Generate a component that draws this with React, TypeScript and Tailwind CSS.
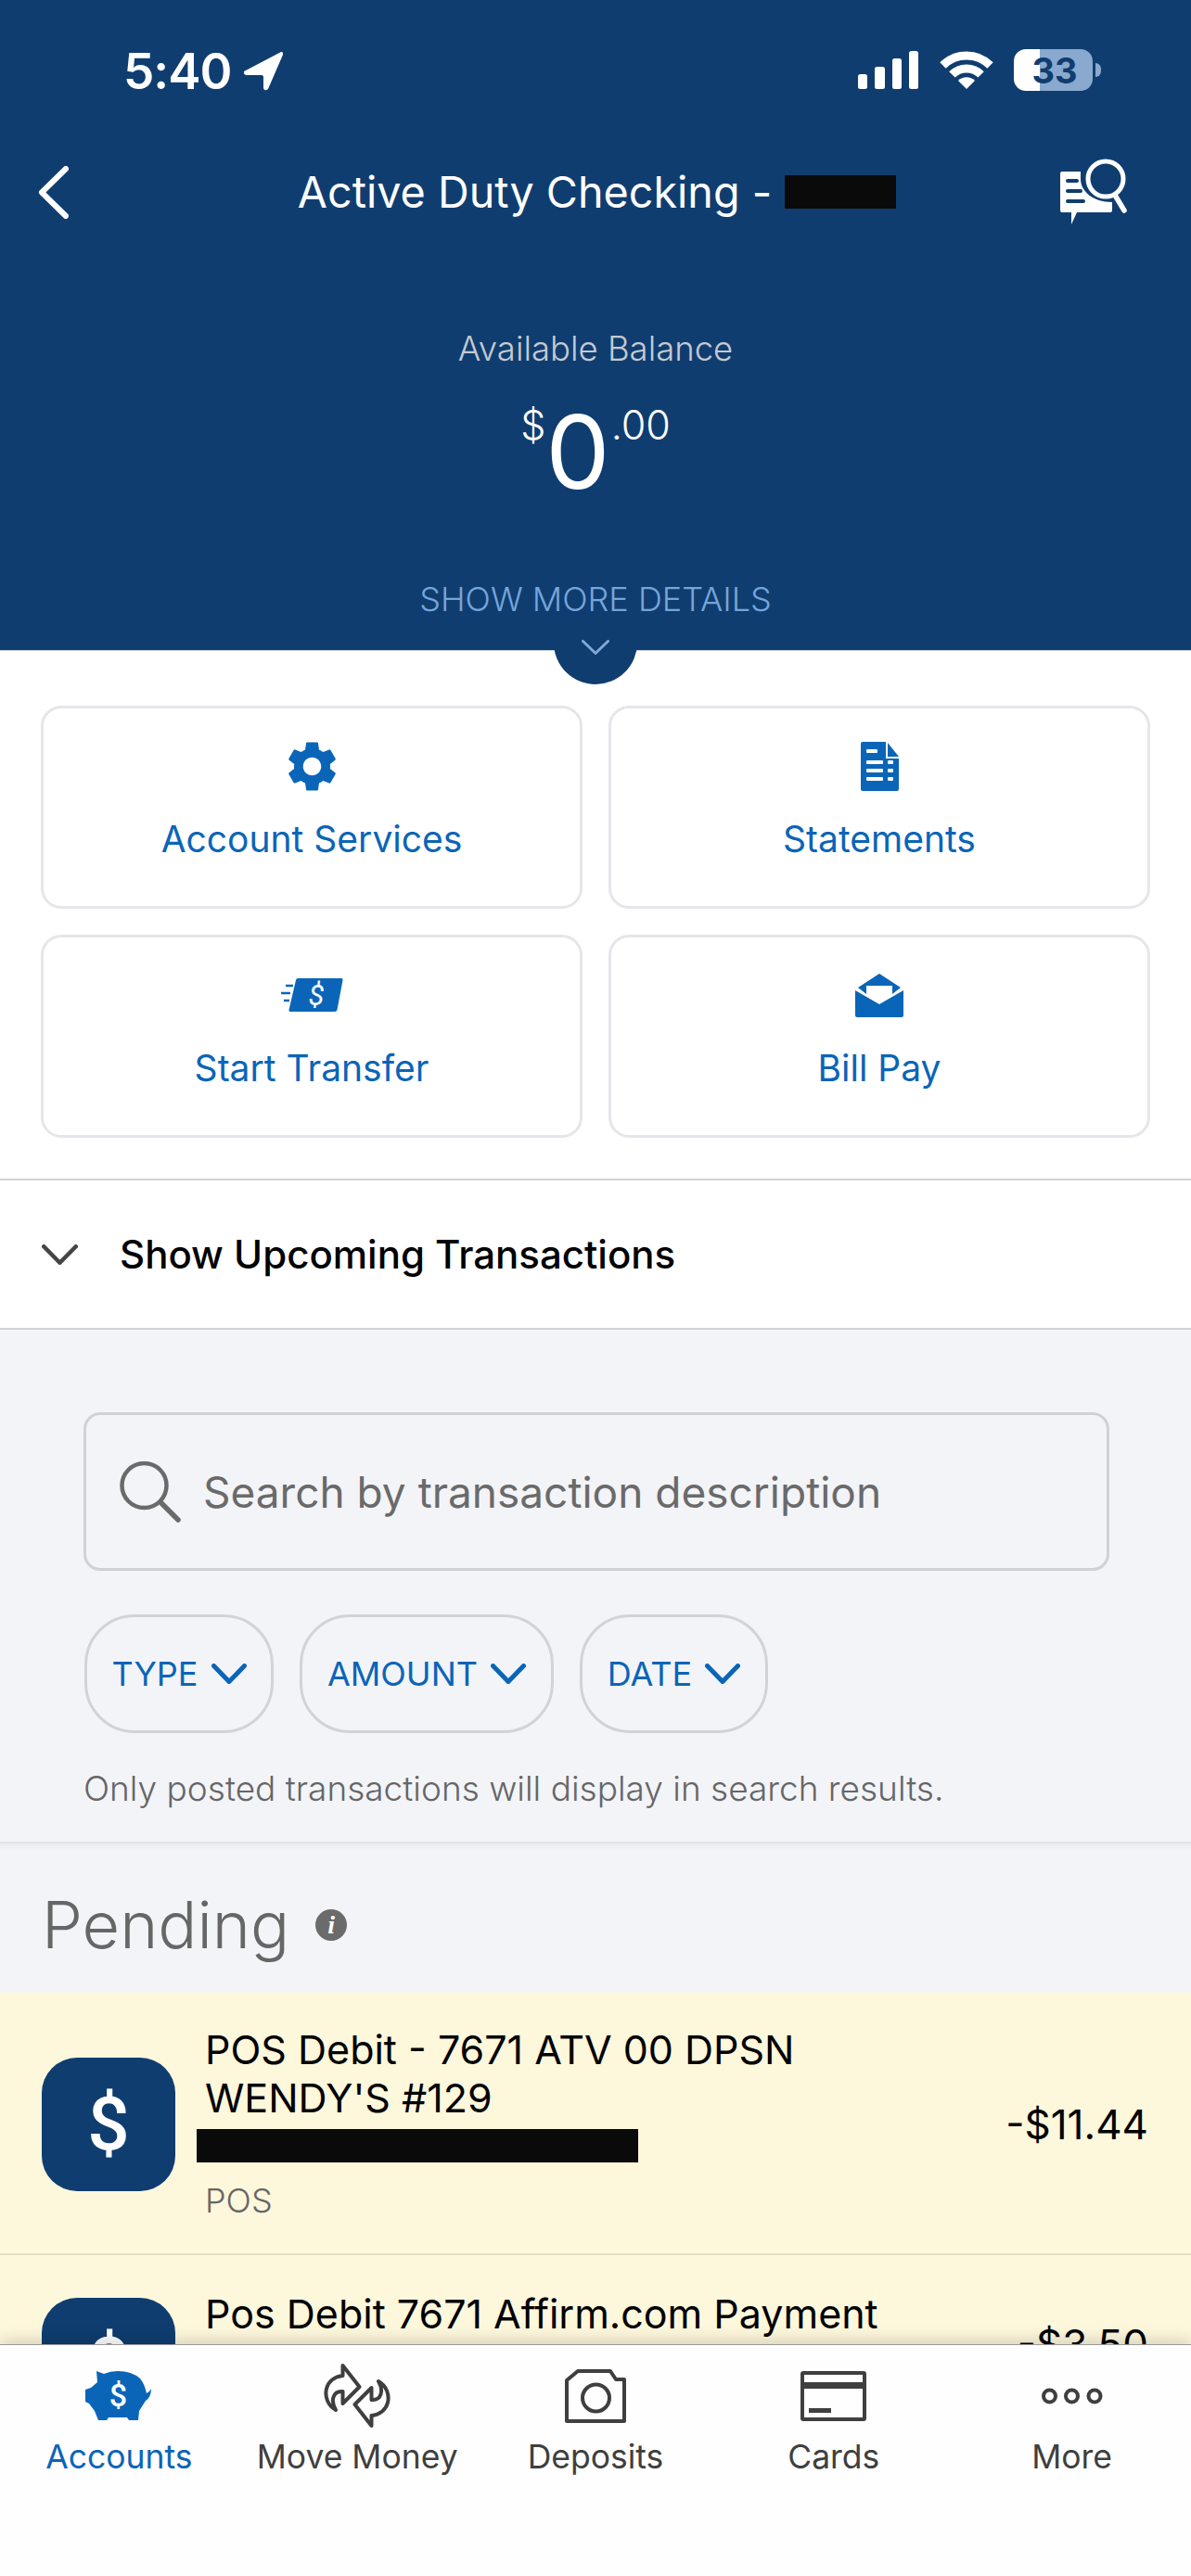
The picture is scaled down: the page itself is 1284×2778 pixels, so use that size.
import { MdSettings } from 'react-icons/md'

const Chevron = ({ className, w, h, sw }: { className: string; w: number; h: number; sw: number }) => (
  <svg width={w} height={h} viewBox={`0 0 ${w} ${h}`} className={className} fill="none" stroke="currentColor" strokeWidth={sw} strokeLinecap="round" strokeLinejoin="round">
    <polyline points={`${sw / 2},${sw / 2} ${w / 2},${h - sw / 2} ${w - sw / 2},${sw / 2}`} />
  </svg>
)

function StatusBar() {
  return (
    <div className="flex h-[130px] items-start justify-between pl-[133px] pr-[97px] pt-[53px]">
      <div className="flex items-center gap-[13px]">
        <span className="text-[53px] font-semibold leading-[48px] tracking-[-1px] text-white">5:40</span>
        <svg width="42" height="42" viewBox="0 0 42 42" fill="white">
          <path d="M40 0 L0 21 Q-1 25 3 25 L19 25 Q21 25 21 27 L21 39 Q22 43 26 40 L42 3 Q42 -1 40 0 Z" />
        </svg>
      </div>
      <div className="flex items-start">
        <svg width="66" height="42" viewBox="0 0 66 42" fill="white" className="mt-[2px]">
          <rect x="0" y="25" width="10" height="16" rx="2.5" />
          <rect x="18" y="17" width="11" height="24" rx="2.5" />
          <rect x="37" y="8" width="10" height="33" rx="2.5" />
          <rect x="55" y="0" width="10" height="41" rx="2.5" />
        </svg>
        <svg width="58" height="42" viewBox="0 0 58 42" className="ml-[22px] mt-[1px]" fill="none" stroke="white" strokeWidth="9">
          <path d="M3.5 16.5 A36 36 0 0 1 54.5 16.5" />
          <path d="M13.4 26.4 A22 22 0 0 1 44.6 26.4" />
          <path d="M29 42 L20 33 A12.7 12.7 0 0 1 38 33 Z" fill="white" stroke="none" />
        </svg>
        <div className="ml-[22px] flex items-center">
          <div className="flex h-[45px] w-[85px] items-center justify-center rounded-[13px] bg-[linear-gradient(to_right,white_33%,#8aa9cf_33%)] pl-[3px] text-[38px] font-bold leading-none text-[#103d70]">33</div>
          <div className="ml-[3px] h-[15px] w-[6px] rounded-r-full bg-[#8aa9cf]" />
        </div>
      </div>
    </div>
  )
}

function NavBar() {
  return (
    <div className="mt-[40px] grid h-[74px] grid-cols-[130px_1fr_130px] items-center">
      <svg width="33" height="57" viewBox="0 0 33 57" fill="none" stroke="white" strokeWidth="6" strokeLinecap="round" strokeLinejoin="round" className="ml-[41px]">
        <polyline points="30,3 4,28.5 30,54" />
      </svg>
      <div className="flex items-center justify-center pl-[3px] text-[46.7px] leading-[60px] text-white">
        <span>Active Duty Checking -</span>
        <span className="ml-[14px] h-[36px] w-[120px] bg-[#0a0a0a]" />
      </div>
      <svg width="72" height="72" viewBox="0 0 72 72" fill="white" className="ml-[-11px]">
        <circle cx="49" cy="22" r="19" fill="none" stroke="white" strokeWidth="5" />
        <line x1="60" y1="41" x2="69" y2="56" stroke="white" strokeWidth="5.5" strokeLinecap="round" />
        <path d="M2 14 H22 V22 C22 35 35 47 56 47 V56 Q56 58 54 58 H18 L12 71 V58 H2 Q0 58 0 56 V16 Q0 14 2 14 Z" />
        <g stroke="#103d70" strokeWidth="4" strokeLinecap="round">
          <line x1="8" y1="24" x2="18" y2="24" />
          <line x1="8" y1="35" x2="22" y2="35" />
          <line x1="8" y1="46" x2="25" y2="46" />
        </g>
      </svg>
    </div>
  )
}

function Balance() {
  return (
    <div className="flex flex-col items-center">
      <div className="mt-[110px] text-[36.5px] font-light leading-[44px] text-[#c5cad1]">Available Balance</div>
      <div className="mt-[34px] flex h-[100px] items-start text-white">
        <span className="text-[43px] font-light leading-[52px]">$</span>
        <span className="text-[110px] font-normal leading-[110px]">0</span>
        <span className="ml-[1px] text-[43px] font-light leading-[52px]">.00</span>
      </div>
      <div className="mt-[92px] text-[36px] font-light leading-[44px] text-[#74a6da]">SHOW MORE DETAILS</div>
    </div>
  )
}

const GearIcon = () => <MdSettings size={65} className="text-[#0a65b8]" />

const DocIcon = () => (
  <svg width="41" height="53" viewBox="0 0 41 53" fill="#0a65b8">
    <path d="M2 0 H27 V18 H41 V51 Q41 53 39 53 H2 Q0 53 0 51 V2 Q0 0 2 0 Z" />
    <path d="M29 1 L41 16 H29 Z" />
    <g fill="white">
      <rect x="6" y="8" width="12" height="4" rx="1" />
      <rect x="6" y="20" width="18" height="4" rx="1" />
      <rect x="29" y="20" width="6" height="4" rx="1" />
      <rect x="6" y="29" width="18" height="4" rx="1" />
      <rect x="29" y="29" width="6" height="4" rx="1" />
      <rect x="6" y="38" width="18" height="4" rx="1" />
      <rect x="29" y="38" width="6" height="4" rx="1" />
    </g>
  </svg>
)

const TransferIcon = () => (
  <svg width="67" height="37" viewBox="0 0 67 37" fill="#0a65b8">
    <path d="M18 0 H65 Q67 0 66.5 2 L60.5 34 Q60 36 58 36 H10 Q8 36 8.5 34 L16 2 Q16.5 0 18 0 Z" />
    <g stroke="#0a65b8" strokeWidth="2.5">
      <line x1="5" y1="8" x2="13" y2="8" />
      <line x1="0" y1="16" x2="10" y2="16" />
      <line x1="3" y1="24" x2="9" y2="24" />
    </g>
    <text x="38" y="29" textAnchor="middle" fill="white" fontSize="31" fontStyle="italic" fontFamily="Roboto, sans-serif">$</text>
  </svg>
)

const EnvelopeIcon = () => (
  <svg width="52" height="47" viewBox="0 0 52 47" fill="#0a65b8">
    <path d="M26 0 L49 15 L40 22 V13 H12 V22 L3 15 Z" />
    <path d="M0 18 L26 33 L52 18 V45 Q52 47 50 47 H2 Q0 47 0 45 Z" />
  </svg>
)

const actions = [
  { label: 'Account Services', icon: <GearIcon /> },
  { label: 'Statements', icon: <DocIcon /> },
  { label: 'Start Transfer', icon: <TransferIcon /> },
  { label: 'Bill Pay', icon: <EnvelopeIcon /> },
]

function ActionCard({ label, icon }: { label: string; icon: React.ReactNode }) {
  return (
    <div className="flex h-[219px] flex-col items-center rounded-[22px] border-[3px] border-[#e5e6ea] bg-white pt-[30px]">
      <div className="flex h-[64px] items-center justify-center">{icon}</div>
      <div className="mt-[23px] text-[39px] leading-[48px] text-[#0a65b8]">{label}</div>
    </div>
  )
}

function Filter({ label, w }: { label: string; w: string }) {
  return (
    <div className={`flex h-[128px] items-center justify-center gap-[14px] rounded-[54px] border-[3px] border-[#d2d3d5] ${w}`}>
      <span className="text-[36px] leading-none text-[#0a65b8]">{label}</span>
      <Chevron className="text-[#0a65b8]" w={38} h={22} sw={5} />
    </div>
  )
}

function SearchPanel() {
  return (
    <div className="border-b-2 border-[#e3e4e8] bg-[#f3f4f8] pb-[35px] pl-[90px] pr-[88px] pt-[89px]">
      <div className="flex h-[171px] items-center rounded-[18px] border-[3px] border-[#d0d1d3] pl-[36px]">
        <svg width="66" height="66" viewBox="0 0 66 66" fill="none" stroke="#6a6a6a" strokeWidth="4.5" strokeLinecap="round">
          <circle cx="26.5" cy="26" r="24" />
          <line x1="44" y1="44" x2="63" y2="63" strokeWidth="5.5" />
        </svg>
        <span className="ml-[24px] text-[46px] leading-none text-[#6a6a6a]">Search by transaction description</span>
      </div>
      <div className="mt-[47px] flex gap-[28px] pl-[1px]">
        <Filter label="TYPE" w="w-[204px]" />
        <Filter label="AMOUNT" w="w-[274px]" />
        <Filter label="DATE" w="w-[203px]" />
      </div>
      <div className="mt-[38px] text-[37px] font-light leading-[44px] text-[#666]">Only posted transactions will display in search results.</div>
    </div>
  )
}

function DollarTile() {
  return (
    <div className="flex h-[144px] w-[144px] shrink-0 items-center justify-center rounded-[38px] bg-[#0f3d70] font-['Roboto',sans-serif] text-[80px] font-medium leading-none text-white">$</div>
  )
}

function Pending() {
  return (
    <div className="bg-[#f3f4f8]">
      <div className="flex h-[161px] items-center pl-[45px] pt-[14px] shadow-[inset_0_10px_10px_-10px_rgba(0,0,0,0.08)]">
        <span className="text-[70px] font-light leading-none text-[#666]">Pending</span>
        <span className="ml-[28px] mt-[1px] flex h-[34px] w-[34px] items-center justify-center rounded-full bg-[#6b6b6b] font-['Liberation_Serif',serif] text-[28px] font-bold italic leading-none text-white">i</span>
      </div>
      <div className="h-[283px] border-b-2 border-[#e4dfc8] bg-[#fdf7dc]">
        <div className="flex h-full items-center pl-[45px] pr-[46px] pt-[3px]">
          <DollarTile />
          <div className="ml-[32px] flex-1">
            <div className="mt-[-4px] text-[43px] leading-[52px] text-black">POS Debit - 7671 ATV 00 DPSN</div>
            <div className="text-[43px] leading-[52px] text-black">WENDY'S #129</div>
            <div className="ml-[-9px] mt-[8px] h-[36px] w-[476px] bg-[#0a0a0a]" />
            <div className="mt-[19px] text-[36px] font-light leading-[44px] text-[#666]">POS</div>
          </div>
          <div className="text-[44px] leading-none text-black">-$11.44</div>
        </div>
      </div>
      <div className="flex h-[300px] items-start bg-[#fdf7dc] pl-[45px] pr-[46px] pt-[46px]">
        <DollarTile />
        <div className="ml-[32px] mt-[-9px] flex-1 text-[43px] leading-[52px] text-black">Pos Debit 7671 Affirm.com Payment</div>
        <div className="mt-[24px] text-[44px] leading-[52px] text-black">-$3.50</div>
      </div>
    </div>
  )
}

const PiggyIcon = () => (
  <svg width="72" height="55" viewBox="0 0 72 55">
    <path fill="#0a65b8" d="M12 0 L20 3 Q27 0 35 0 Q50 0 59 8 Q64 14 66 24 Q69 23 71 19 Q71 28 65 32 L58 43 L57 53 H47 L45 50 H25 L23 53 H14 L10 43 L4 35 L0 33 V20 L6 18 L13 12 Z" />
    <text x="35.5" y="38" textAnchor="middle" fill="white" fontSize="34" fontWeight="500" fontFamily="Roboto, sans-serif">$</text>
  </svg>
)

const MoveIcon = () => (
  <svg width="72" height="72" viewBox="0 0 72 72" fill="none" stroke="#3f3f3f" strokeWidth="4" strokeLinejoin="round">
    <path d="M20.5 3 L38.5 26 L20.5 44 V31 C10 30 7 41 13 51 C4 46 1 36 3 28 C5 20 12 15 20.5 14 Z" />
    <path transform="rotate(180 36 35.5)" d="M20.5 3 L38.5 26 L20.5 44 V31 C10 30 7 41 13 51 C4 46 1 36 3 28 C5 20 12 15 20.5 14 Z" />
  </svg>
)

const CameraIcon = () => (
  <svg width="66" height="58" viewBox="0 0 66 58" fill="none" stroke="#3f3f3f" strokeWidth="4" strokeLinejoin="round">
    <path d="M2 12 L14 2 H49 L55 11 H64 V56 H2 Z" />
    <circle cx="33.5" cy="31" r="14.5" />
  </svg>
)

const CardIcon = () => (
  <svg width="71" height="54" viewBox="0 0 71 54" fill="none" stroke="#3f3f3f" strokeWidth="4" strokeLinejoin="round">
    <rect x="2" y="2" width="67" height="50" rx="1" />
    <rect x="2" y="12" width="67" height="7" fill="#3f3f3f" stroke="none" />
    <rect x="9" y="40" width="24" height="5" fill="#3f3f3f" stroke="none" />
  </svg>
)

const MoreIcon = () => (
  <svg width="67" height="18" viewBox="0 0 67 18" fill="none" stroke="#3f3f3f" strokeWidth="4">
    <circle cx="9.5" cy="9" r="6.5" />
    <circle cx="33.5" cy="9" r="6.5" />
    <circle cx="58" cy="9" r="6.5" />
  </svg>
)

const tabs = [
  { label: 'Accounts', icon: <PiggyIcon />, active: true },
  { label: 'Move Money', icon: <MoveIcon />, active: false },
  { label: 'Deposits', icon: <CameraIcon />, active: false },
  { label: 'Cards', icon: <CardIcon />, active: false },
  { label: 'More', icon: <MoreIcon />, active: false },
]

function TabBar() {
  return (
    <div className="relative z-10 grid h-[250px] shrink-0 grid-cols-5 border-t border-[#999] bg-[#fefefe] shadow-[0_-6px_14px_rgba(0,0,0,0.13)]">
      {tabs.map((tab) => (
        <div key={tab.label} className="flex flex-col items-center pt-[19px]">
          <div className="flex h-[72px] items-center justify-center">{tab.icon}</div>
          <div className={`mt-[8px] text-[35.5px] leading-[44px] ${tab.active ? 'text-[#0a65b8]' : 'text-[#3f3f3f]'}`}>{tab.label}</div>
        </div>
      ))}
    </div>
  )
}

export default function App() {
  return (
    <div className="flex h-[2778px] w-[1284px] flex-col overflow-hidden bg-white font-['Inter',sans-serif]">
      <div className="min-h-0 flex-1 overflow-hidden">
        <div className="relative h-[702px] border-b border-[#c5d3e0] bg-[#103d70]">
          <StatusBar />
          <NavBar />
          <Balance />
          <div className="absolute left-[597px] top-[684px] flex h-[54px] w-[90px] justify-center rounded-b-[45px] bg-[#103d70] pt-[6px]">
            <Chevron className="text-[#7fa9d6]" w={30} h={16} sw={3} />
          </div>
        </div>
        <div className="grid grid-cols-2 gap-x-[28px] gap-y-[28px] px-[44px] pb-[44px] pt-[59px]">
          {actions.map((action) => (
            <ActionCard key={action.label} label={action.label} icon={action.icon} />
          ))}
        </div>
        <div className="flex h-[163px] items-center border-y-2 border-[#d3d3d3] pl-[45px]">
          <Chevron className="text-[#444]" w={39} h={22} sw={4.5} />
          <span className="ml-[45px] text-[42px] font-medium leading-none text-black">Show Upcoming Transactions</span>
        </div>
        <SearchPanel />
        <Pending />
      </div>
      <TabBar />
    </div>
  )
}
